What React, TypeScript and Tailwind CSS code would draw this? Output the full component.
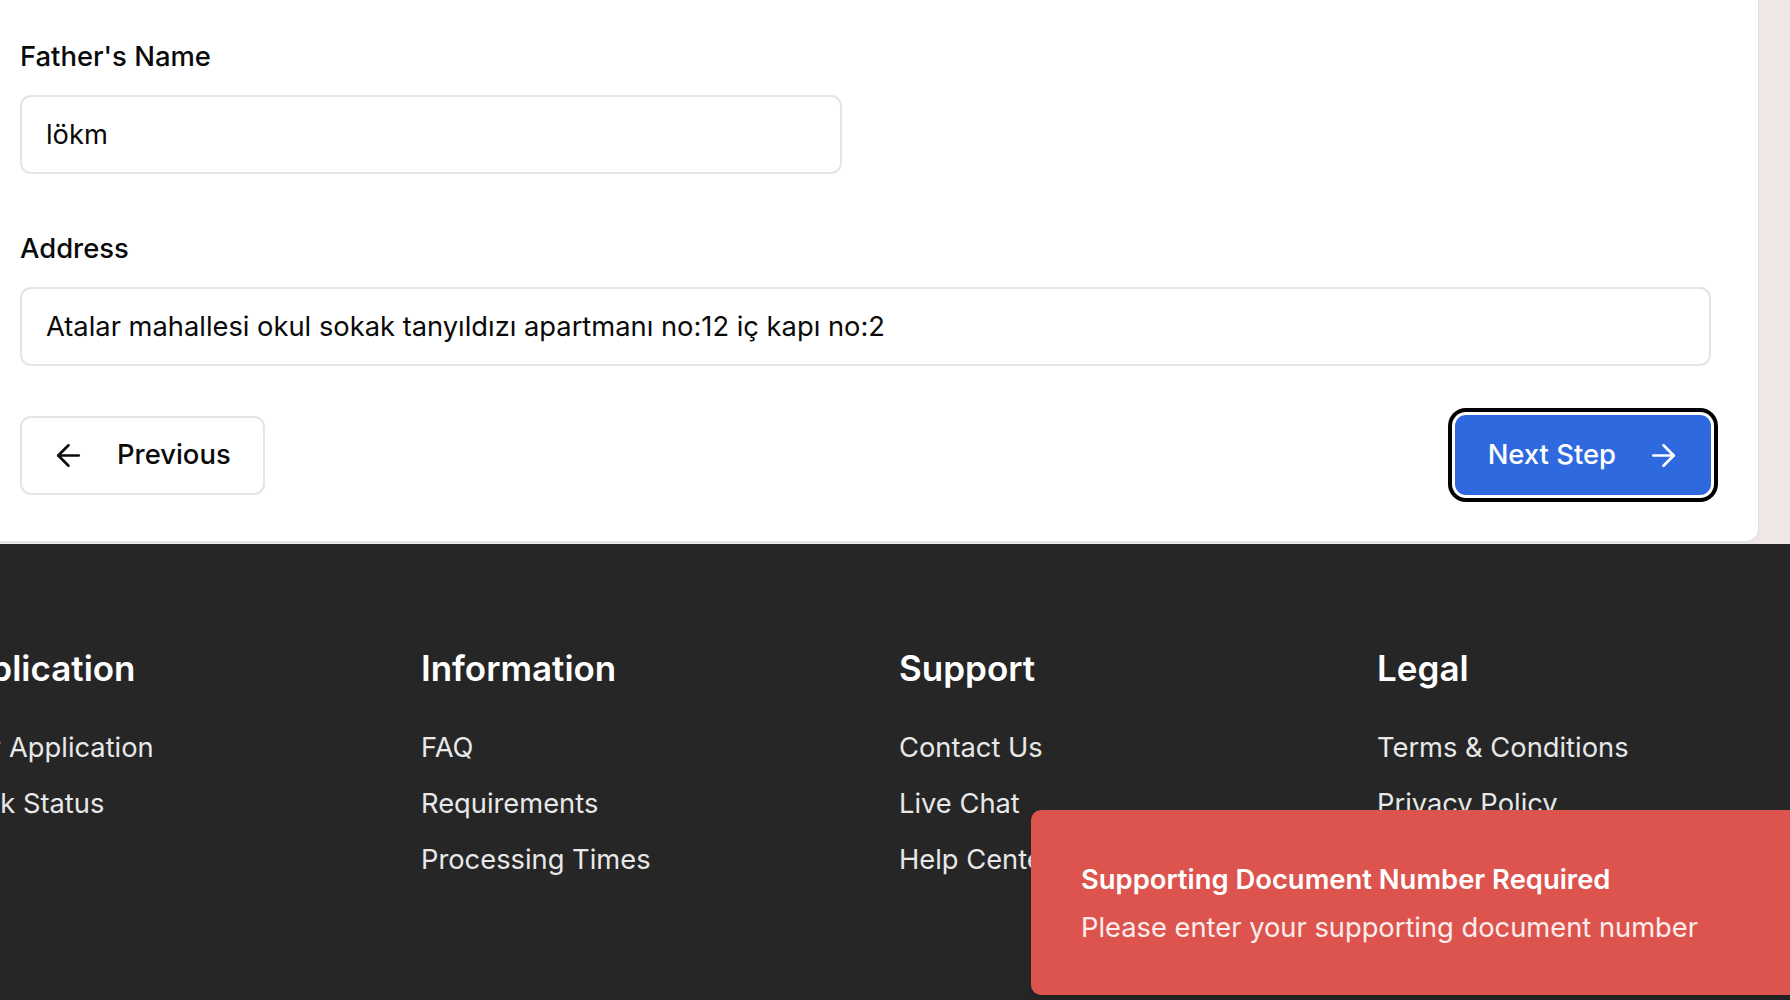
import React from 'react';
import { ArrowLeft, ArrowRight } from 'lucide-react';

const footerColumns = [
  { title: 'Application', links: ['New Application', 'Track Status'] },
  { title: 'Information', links: ['FAQ', 'Requirements', 'Processing Times'] },
  { title: 'Support', links: ['Contact Us', 'Live Chat', 'Help Center'] },
  { title: 'Legal', links: ['Terms & Conditions', 'Privacy Policy', 'Cookie Policy'] },
];

const Field = ({ label, value }: { label: string; value: string }) => (
  <div className="flex flex-col">
    <label className="text-[27.4px] leading-[40px] font-medium text-[#0a0a0a] mb-[19px]">{label}</label>
    <input
      readOnly
      value={value}
      className="h-[79px] w-full rounded-[11px] border-2 border-[#e5e5e5] bg-white px-[24px] text-[27.3px] text-[#0a0a0a] outline-none"
    />
  </div>
);

export default function App() {
  return (
    <div
      className="relative w-[1790px] h-[1000px] overflow-hidden bg-[#efe7e5]"
      style={{ fontFamily: 'Inter, "Noto Sans", sans-serif' }}
    >
      {/* form card */}
      <div className="h-[544px] flex">
        <div className="w-[1759px] h-[543px] bg-white rounded-br-[14px] border-b-2 border-r border-[#e2e2e2] pl-[20px] pr-[47px] pt-[36px]">
          <div className="grid grid-cols-2 gap-x-[48px]">
            <Field label="Father's Name" value="lökm" />
          </div>
          <div className="mt-[54px]">
            <Field label="Address" value="Atalar mahallesi okul sokak tanyıldızı apartmanı no:12 iç kapı no:2" />
          </div>
          <div className="mt-[49px] flex items-center justify-between">
            <button className="h-[79px] flex items-center gap-[31px] rounded-[11px] border-2 border-[#e5e5e5] bg-white pl-[29px] pr-[32px] text-[27.4px] font-medium text-[#0a0a0a]">
              <ArrowLeft size={35} strokeWidth={1.8} />
              <span>Previous</span>
            </button>
            <button className="h-[80px] flex items-center gap-[30px] rounded-[11px] bg-[#2e69df] pl-[33px] pr-[30px] text-[27.4px] font-medium text-white ring-[4px] ring-black ring-offset-[3px] ring-offset-white">
              <span>Next Step</span>
              <ArrowRight size={35} strokeWidth={1.8} />
            </button>
          </div>
        </div>
      </div>

      {/* footer */}
      <footer className="h-[456px] bg-[#262626] pt-[100px]">
        <div className="ml-[-57px] flex">
          {footerColumns.map((col) => (
            <div key={col.title} className="w-[478px] shrink-0">
              <h3 className="text-[35px] leading-[48px] font-semibold text-white">{col.title}</h3>
              <ul className="mt-[35px] flex flex-col gap-[14px]">
                {col.links.map((link) => (
                  <li key={link} className="text-[27.3px] leading-[42px] text-[#e8e8e8]">
                    {link}
                  </li>
                ))}
              </ul>
            </div>
          ))}
        </div>
      </footer>

      {/* toast */}
      <div className="absolute left-[1031px] top-[810px] w-[800px] h-[185px] rounded-[10px] bg-[#dd534e] pl-[50px] pt-[52px] shadow-lg">
        <p className="text-[27.4px] leading-[35px] font-semibold text-white">Supporting Document Number Required</p>
        <p className="mt-[13px] text-[27.3px] leading-[35px] text-white/90">Please enter your supporting document number</p>
      </div>
    </div>
  );
}
